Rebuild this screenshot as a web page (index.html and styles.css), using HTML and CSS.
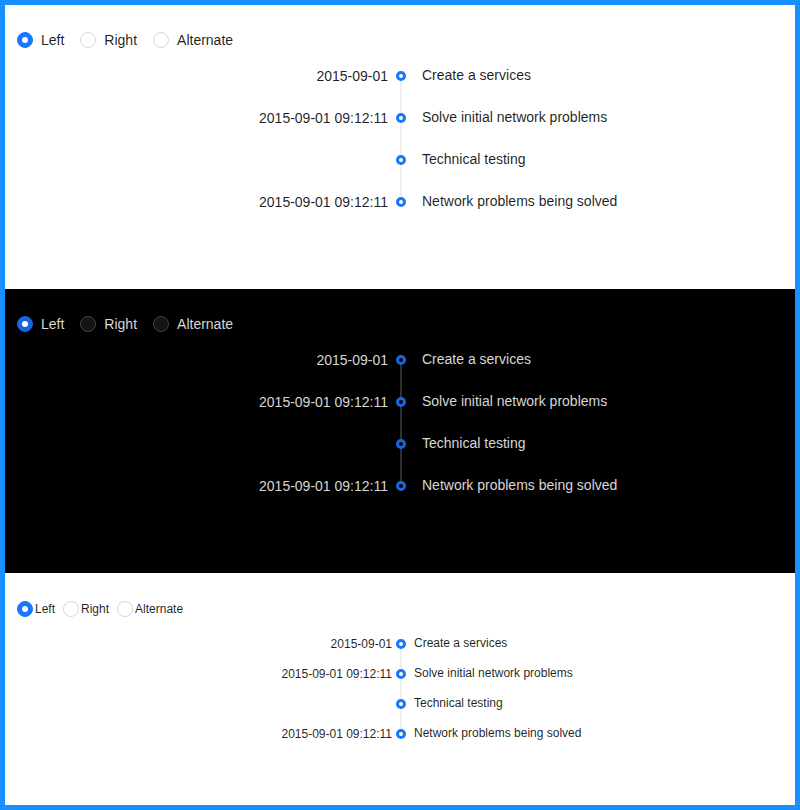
FILE: index.html
```html
<!DOCTYPE html>
<html>
<head>
<meta charset="utf-8">
<link rel="stylesheet" href="styles.css">
</head>
<body>
<div class="frame">
  <section class="demo">
    <div class="radios">
      <label class="radio checked"><span class="ring"></span><span class="rtext">Left</span></label>
      <label class="radio"><span class="ring"></span><span class="rtext">Right</span></label>
      <label class="radio"><span class="ring"></span><span class="rtext">Alternate</span></label>
    </div>
    <ul class="timeline">
      <li class="item"><span class="label">2015-09-01</span><span class="head"></span><span class="content">Create a services</span></li>
      <li class="item"><span class="label">2015-09-01 09:12:11</span><span class="head"></span><span class="content">Solve initial network problems</span></li>
      <li class="item"><span class="label"></span><span class="head"></span><span class="content">Technical testing</span></li>
      <li class="item last"><span class="label">2015-09-01 09:12:11</span><span class="head"></span><span class="content">Network problems being solved</span></li>
    </ul>
  </section>
  <section class="demo dark">
    <div class="radios">
      <label class="radio checked"><span class="ring"></span><span class="rtext">Left</span></label>
      <label class="radio"><span class="ring"></span><span class="rtext">Right</span></label>
      <label class="radio"><span class="ring"></span><span class="rtext">Alternate</span></label>
    </div>
    <ul class="timeline">
      <li class="item"><span class="label">2015-09-01</span><span class="head"></span><span class="content">Create a services</span></li>
      <li class="item"><span class="label">2015-09-01 09:12:11</span><span class="head"></span><span class="content">Solve initial network problems</span></li>
      <li class="item"><span class="label"></span><span class="head"></span><span class="content">Technical testing</span></li>
      <li class="item last"><span class="label">2015-09-01 09:12:11</span><span class="head"></span><span class="content">Network problems being solved</span></li>
    </ul>
  </section>
  <section class="demo small">
    <div class="radios">
      <label class="radio checked"><span class="ring"></span><span class="rtext">Left</span></label>
      <label class="radio"><span class="ring"></span><span class="rtext">Right</span></label>
      <label class="radio"><span class="ring"></span><span class="rtext">Alternate</span></label>
    </div>
    <ul class="timeline">
      <li class="item"><span class="label">2015-09-01</span><span class="head"></span><span class="content">Create a services</span></li>
      <li class="item"><span class="label">2015-09-01 09:12:11</span><span class="head"></span><span class="content">Solve initial network problems</span></li>
      <li class="item"><span class="label"></span><span class="head"></span><span class="content">Technical testing</span></li>
      <li class="item last"><span class="label">2015-09-01 09:12:11</span><span class="head"></span><span class="content">Network problems being solved</span></li>
    </ul>
  </section>
</div>
</body>
</html>
```

FILE: styles.css
```css
* { box-sizing: border-box; }
html, body { margin: 0; padding: 0; }
body {
  font-family: "Liberation Sans", Arial, sans-serif;
  font-size: 14px;
  color: rgba(0,0,0,0.88);
  background: #fff;
}
.frame {
  width: 800px;
  height: 810px;
  border: 5px solid #1890ff;
  display: flex;
  flex-direction: column;
}
.demo {
  height: 284px;
  padding: 24px 12px 0;
  background: #fff;
  flex: none;
}
.demo.small { flex: 1; height: auto; }
.demo.dark { background: #000; color: rgba(255,255,255,0.85); }

.radios { display: flex; align-items: center; height: 22px; line-height: 22px; }
.radio { display: flex; align-items: center; margin-right: 8px; cursor: pointer; }
.ring {
  width: 16px; height: 16px; border-radius: 50%;
  border: 1px solid #d9d9d9; background: #fff;
  display: flex; align-items: center; justify-content: center;
  flex: none;
}
.radio.checked .ring { background: #1677ff; border-color: #1677ff; }
.radio.checked .ring::after {
  content: ""; width: 6px; height: 6px; border-radius: 50%; background: #fff;
}
.rtext { padding: 0 8px; }
.dark .ring { background: #141414; border-color: #424242; }
.dark .radio.checked .ring { background: #1668dc; border-color: #1668dc; }

.timeline { list-style: none; margin: 14px 0 0; padding: 0; }
.item {
  position: relative;
  display: grid;
  grid-template-columns: 371px 8px 10px 16px 1fr;
  align-items: center;
  height: 22px;
  line-height: 22px;
  margin-bottom: 20px;
}
.item::before {
  content: "";
  position: absolute;
  left: 383px; top: 11px;
  width: 2px; height: 42px;
  background: #f0f0f0;
}
.item.last::before { display: none; }
.label { grid-column: 1; text-align: right; white-space: nowrap; }
.head {
  grid-column: 3;
  position: relative;
  width: 10px; height: 10px;
  border-radius: 50%;
  border: 3px solid #1677ff;
  background: #fff;
}
.content { grid-column: 5; white-space: nowrap; position: relative; top: -1px; }

.dark .head { border-color: #1668dc; background: #000; }
.dark .item::before { background: #303030; }

.small { font-size: 12px; }
.small .radios { height: 24px; line-height: 20px; }
.small .rtext { padding: 0 2px; }
.small .radio { margin-right: 6px; }
.small .timeline { margin-top: 13px; }
.small .item {
  grid-template-columns: 375px 4px 10px 8px 1fr;
  height: 20px; line-height: 20px; margin-bottom: 10px;
}
.small .item::before { left: 383px; top: 10px; height: 30px; }
```
